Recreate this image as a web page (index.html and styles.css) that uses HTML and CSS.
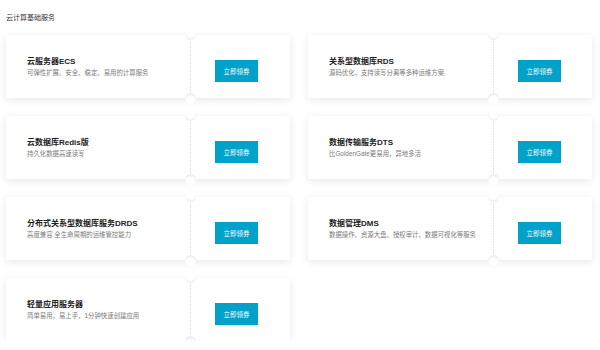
FILE: index.html
```html
<!DOCTYPE html>
<html lang="zh-CN">
  <head>
    <meta charset="UTF-8" />
    <title>云计算基础服务</title>
    <link rel="stylesheet" href="styles.css">
  </head>
  <body>
    <div class="section">
      <h2 class="section-title">云计算基础服务</h2>
      <div class="grid">
        <div class="card">
          <div class="info">
            <div class="name">云服务器ECS</div>
            <div class="desc">可弹性扩展、安全、稳定、易用的计算服务</div>
          </div>
          <div class="action"><button>立即领券</button></div>
        </div>
        <div class="card">
          <div class="info">
            <div class="name">关系型数据库RDS</div>
            <div class="desc">源码优化，支持读写分离等多种运维方案</div>
          </div>
          <div class="action"><button>立即领券</button></div>
        </div>
        <div class="card">
          <div class="info">
            <div class="name">云数据库Redis版</div>
            <div class="desc">持久化数据高速读写</div>
          </div>
          <div class="action"><button>立即领券</button></div>
        </div>
        <div class="card">
          <div class="info">
            <div class="name">数据传输服务DTS</div>
            <div class="desc">比GoldenGate更易用，异地多活</div>
          </div>
          <div class="action"><button>立即领券</button></div>
        </div>
        <div class="card">
          <div class="info">
            <div class="name">分布式关系型数据库服务DRDS</div>
            <div class="desc">高度兼容 全生命周期的运维管控能力</div>
          </div>
          <div class="action"><button>立即领券</button></div>
        </div>
        <div class="card">
          <div class="info">
            <div class="name">数据管理DMS</div>
            <div class="desc">数据操作、资源大盘、授权审计、数据可视化等服务</div>
          </div>
          <div class="action"><button>立即领券</button></div>
        </div>
        <div class="card">
          <div class="info">
            <div class="name">轻量应用服务器</div>
            <div class="desc">简单易用，易上手，1分钟快速创建应用</div>
          </div>
          <div class="action"><button>立即领券</button></div>
        </div>
      </div>
    </div>
  </body>
</html>
```

FILE: styles.css
```css
* {
  box-sizing: border-box;
  margin: 0;
  padding: 0;
}

body {
  background-color: #ffffff;
  font-family: "Liberation Sans", "Noto Sans CJK SC", sans-serif;
  color: #333333;
}

.section {
  padding: 13px 8px 0 6px;
}

.section-title {
  font-size: 7px;
  font-weight: normal;
  line-height: 10px;
  color: #333;
  margin-bottom: 12px;
}

.grid {
  display: grid;
  grid-template-columns: 284px 284px;
  column-gap: 18px;
  row-gap: 18px;
}

.card {
  display: flex;
  height: 63px;
  background-color: #fff;
  box-shadow: 0 2px 8px rgba(0, 0, 0, 0.09);
}

.info {
  position: relative;
  width: 185px;
  padding: 4px 0 0 21px;
  display: flex;
  flex-direction: column;
  justify-content: center;
  border-right: 1px dotted #d6d6d6;
}

.grid .card:nth-child(2n) .info {
  width: 186px;
}

/* notches on the dotted line */
.info::before,
.info::after {
  content: "";
  position: absolute;
  right: -6px;
  width: 11px;
  height: 11px;
  border-radius: 50%;
  background-color: #fff;
}

.info::before {
  top: -6px;
  box-shadow: inset 0 -2px 2px rgba(0, 0, 0, 0.06);
}

.info::after {
  bottom: -6px;
  box-shadow: inset 0 2px 2px rgba(0, 0, 0, 0.08);
}

.name {
  font-size: 8px;
  font-weight: bold;
  color: #222;
  line-height: 11px;
  margin-top: -3px;
}

.desc {
  font-size: 6.4px;
  color: #7a7a7a;
  line-height: 10px;
  margin-top: 1px;
}

.action {
  flex: 1;
  display: flex;
  align-items: center;
  padding-left: 24px;
  padding-top: 9px;
}

button {
  width: 43px;
  height: 22px;
  border: none;
  background-color: #00a2ca;
  color: #fff;
  font-family: "Liberation Sans", "Noto Sans CJK SC", sans-serif;
  font-size: 6.5px;
  cursor: pointer;
}
```
